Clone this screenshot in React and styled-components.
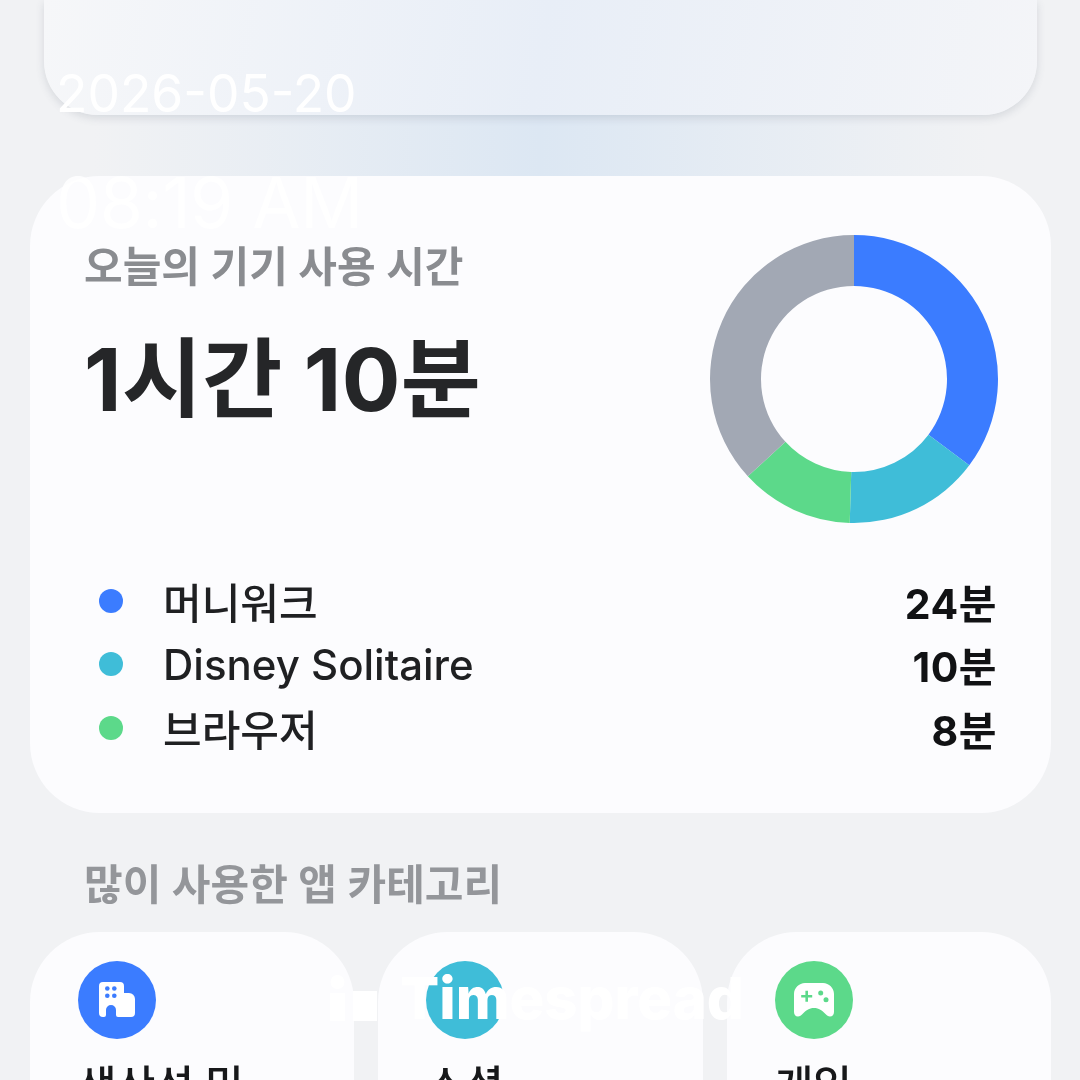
import React from 'react'
import styled, { createGlobalStyle } from 'styled-components'

const GlobalStyle = createGlobalStyle`
  html, body {
    margin: 0;
    padding: 0;
    background: #f1f2f4;
  }
  body {
    font-family: Inter, "Noto Sans CJK KR", sans-serif;
  }
`

const apps = [
  { name: '머니워크', time: '24분', color: '#3b7cff' },
  { name: 'Disney Solitaire', time: '10분', color: '#3fbdd8' },
  { name: '브라우저', time: '8분', color: '#5cd98a' },
]

const slices = [
  { from: 0, to: 126.8, color: '#3b7cff' },
  { from: 126.8, to: 181.7, color: '#3fbdd8' },
  { from: 181.7, to: 227.5, color: '#5cd98a' },
  { from: 227.5, to: 360, color: '#a2a8b4' },
]

function point(r, deg) {
  const a = (deg * Math.PI) / 180
  return `${(150 + r * Math.sin(a)).toFixed(2)} ${(150 - r * Math.cos(a)).toFixed(2)}`
}

function slicePath(from, to) {
  const large = to - from > 180 ? 1 : 0
  return `M${point(144, from)} A144 144 0 ${large} 1 ${point(144, to)} L${point(93, to)} A93 93 0 ${large} 0 ${point(93, from)} Z`
}

function Donut() {
  return (
    <DonutSvg viewBox="0 0 300 300">
      {slices.map((s) => (
        <path key={s.color} d={slicePath(s.from, s.to)} fill={s.color} />
      ))}
    </DonutSvg>
  )
}

function BuildingIcon() {
  return (
    <svg width="36" height="36" viewBox="0 0 36 36">
      <path
        fill="#fff"
        d="M4 0H21a4 4 0 0 1 4 4V11h5a6 6 0 0 1 6 6V31a4 4 0 0 1-4 4H19a2 2 0 0 1-2-2V28a5 5 0 0 0-10 0V33a2 2 0 0 1-2 2H4a4 4 0 0 1-4-4V4a4 4 0 0 1 4-4Z"
      />
      <g fill="#3b7cff">
        <circle cx="8.3" cy="6.5" r="2.3" />
        <circle cx="15.3" cy="6.5" r="2.3" />
        <circle cx="8.3" cy="13.8" r="2.3" />
        <circle cx="15.3" cy="13.8" r="2.3" />
      </g>
    </svg>
  )
}

function GamepadIcon() {
  return (
    <svg width="40" height="34" viewBox="0 0 40 34">
      <path
        fill="#fff"
        d="M11 0H29C35 0 40 5 40 11V29c0 2.500-1.500 4.500-4 4.500-2 0-3-1-4.500-2.500C28 27.500 25 25 20 25S12 27.500 8.500 31C7 32.500 6 33.500 4 33.500 1.500 33.500 0 31.500 0 29V11C0 5 5 0 11 0Z"
      />
      <path fill="none" stroke="#5cd98a" strokeWidth="2.600" d="M7.200 13.300h11M12.700 7.800v11" />
      <circle cx="26.700" cy="10" r="2.500" fill="#5cd98a" />
      <circle cx="32" cy="16.700" r="2.500" fill="#5cd98a" />
    </svg>
  )
}

function BrandMark() {
  return (
    <svg width="47" height="46" viewBox="0 0 47 46">
      <circle cx="7.500" cy="7" r="7" fill="#fff" />
      <rect x="0" y="18" width="15" height="28" fill="#fff" />
      <rect x="23" y="16" width="24" height="30" fill="#fff" />
    </svg>
  )
}

export default function App() {
  return (
    <>
      <GlobalStyle />
      <Screen>
        <TopCard />
        <UsageCard>
          <UsageHead>
            <div>
              <CardTitle>오늘의 기기 사용 시간</CardTitle>
              <TotalTime>1시간 10분</TotalTime>
            </div>
            <Donut />
          </UsageHead>
          <AppList>
            {apps.map((a) => (
              <AppRow key={a.name}>
                <Dot $color={a.color} />
                <AppName>{a.name}</AppName>
                <AppTime>{a.time}</AppTime>
              </AppRow>
            ))}
          </AppList>
        </UsageCard>
        <SectionTitle>많이 사용한 앱 카테고리</SectionTitle>
        <CategoryGrid>
          <CategoryCard>
            <IconCircle $color="#3b7cff"><BuildingIcon /></IconCircle>
            <CategoryName>생산성 및</CategoryName>
          </CategoryCard>
          <CategoryCard>
            <IconCircle $color="#3fbdd8" />
            <CategoryName>소셜</CategoryName>
          </CategoryCard>
          <CategoryCard>
            <IconCircle $color="#5cd98a"><GamepadIcon /></IconCircle>
            <CategoryName>게임</CategoryName>
          </CategoryCard>
        </CategoryGrid>
        <Stamp>
          <span>2026-05-20</span>
          <StampTime>08:19 AM</StampTime>
        </Stamp>
        <Brand>
          <BrandMark />
          <BrandName>Timespread</BrandName>
        </Brand>
      </Screen>
    </>
  )
}

const Screen = styled.div`
  position: relative;
  width: 1080px;
  height: 1080px;
  overflow: hidden;
  background: #f1f2f4;
  padding: 0 29px 0 30px;
  box-sizing: border-box;
  filter: blur(0.5px);
`

const TopCard = styled.div`
  position: relative;
  height: 115px;
  margin: 0 14px;
  border-radius: 0 0 54px 54px;
  background: linear-gradient(100deg, #f6f7f9 0%, #e8eef7 50%, #f4f5f8 100%);
  box-shadow: 0 3px 9px rgba(70, 80, 100, 0.16);

  &::after {
    content: '';
    position: absolute;
    z-index: -1;
    left: 0;
    right: 0;
    top: 60px;
    height: 116px;
    background: linear-gradient(90deg, rgba(220, 231, 243, 0) 5%, #dce7f3 50%, rgba(220, 231, 243, 0) 95%);
  }
`

const UsageCard = styled.section`
  position: relative;
  margin-top: 61px;
  height: 637px;
  box-sizing: border-box;
  padding: 59px 54px 0 54px;
  border-radius: 70px;
  background: #fcfcfe;
`

const UsageHead = styled.div`
  display: flex;
  justify-content: space-between;
  align-items: flex-start;
`

const CardTitle = styled.h2`
  margin: 0;
  font-size: 42px;
  line-height: 64px;
  font-weight: 600;
  color: #8a8c90;
`

const TotalTime = styled.div`
  margin-top: 36px;
  font-size: 87px;
  letter-spacing: 0.4px;
  line-height: 90px;
  font-weight: 700;
  color: #252628;
`

const DonutSvg = styled.svg`
  width: 300px;
  height: 300px;
  margin: -6px -7px 0 0;
`

const AppList = styled.div`
  margin-top: 40px;
  display: flex;
  flex-direction: column;
`

const AppRow = styled.div`
  display: flex;
  align-items: center;
  height: 63.5px;
  padding-left: 15px;
`

const Dot = styled.span`
  width: 24px;
  height: 24px;
  border-radius: 50%;
  background: ${(p) => p.$color};
`

const AppName = styled.span`
  margin-left: 40px;
  font-size: 42px;
  font-weight: 500;
  color: #1f2022;
  flex: 1;
`

const AppTime = styled.span`
  font-size: 41px;
  letter-spacing: 0.5px;
  font-weight: 700;
  color: #111214;
`

const SectionTitle = styled.h2`
  margin: 47px 0 0 54px;
  font-size: 42px;
  line-height: 50px;
  font-weight: 600;
  color: #94969a;
`

const CategoryGrid = styled.div`
  margin-top: 22px;
  display: grid;
  grid-template-columns: repeat(3, 1fr);
  gap: 24px;
`

const CategoryCard = styled.div`
  height: 300px;
  box-sizing: border-box;
  padding: 29px 48px;
  border-radius: 70px;
  background: #fcfcfe;
`

const IconCircle = styled.div`
  width: 78px;
  height: 78px;
  border-radius: 50%;
  background: ${(p) => p.$color};
  display: flex;
  align-items: center;
  justify-content: center;
`

const CategoryName = styled.div`
  margin-top: 21px;
  font-size: 42px;
  line-height: 52px;
  font-weight: 500;
  color: #17181a;
`

const Stamp = styled.div`
  position: absolute;
  left: 56px;
  top: 62px;
  display: flex;
  flex-direction: column;
  font-size: 51.5px;
  line-height: 62px;
  color: #fff;
`

const StampTime = styled.span`
  margin-top: 48px;
  font-size: 70px;
  letter-spacing: -0.5px;
  color: rgba(255, 255, 255, 0.85);
`

const Brand = styled.div`
  position: absolute;
  left: 330px;
  top: 975px;
  display: flex;
  align-items: flex-end;
  gap: 23px;
`

const BrandName = styled.span`
  font-size: 58px;
  line-height: 46px;
  font-weight: 800;
  color: #fff;
`
